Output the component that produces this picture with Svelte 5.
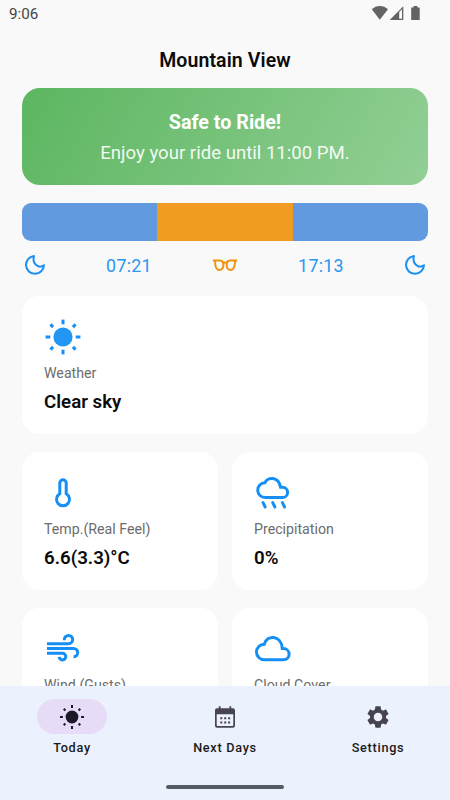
<script>
  let city = 'Mountain View';
  let sunrise = '07:21';
  let sunset = '17:13';

  let cards = [
    { icon: 'sun', label: 'Weather', value: 'Clear sky', wide: true },
    { icon: 'temp', label: 'Temp.(Real Feel)', value: '6.6(3.3)°C' },
    { icon: 'rain', label: 'Precipitation', value: '0%' },
    { icon: 'wind', label: 'Wind (Gusts)', value: '' },
    { icon: 'cloud', label: 'Cloud Cover', value: '' }
  ];

  let tabs = ['Today', 'Next Days', 'Settings'];
  let active = 'Today';

  const rays = [0, 45, 90, 135, 180, 225, 270, 315];
</script>

{#snippet moon()}
  <svg class="moon" viewBox="0 0 22 22">
    <path d="M9.9 1.9A9 9 0 1 0 20 11.3C14.6 15 8 10 9.9 1.9z" />
  </svg>
{/snippet}

<div class="screen">
  <div class="status">
    <span>9:06</span>
    <svg width="50" height="16" viewBox="0 0 50 16">
      <path d="M.8 4.3C5-.2 12.7-.2 17 4.3L8.8 14.8z" />
      <path d="M18.7 15L32.3 1.3V15z" />
      <path class="gap" d="M28.2 6.9L31 4.2V13.7H28.2z" />
      <path d="M40.2 2.5H42.5V1H46.4V2.5H48.7V15H40.2z" />
    </svg>
  </div>

  <h1>{city}</h1>

  <main>
    <section class="banner">
      <strong>Safe to Ride!</strong>
      <p>Enjoy your ride until 11:00 PM.</p>
    </section>

    <div class="daybar"><i></i><i class="light"></i><i></i></div>

    <div class="times">
      {@render moon()}
      <span>{sunrise}</span>
      <svg class="glasses" viewBox="0 0 26 14">
        <path d="M.8 2.5H9M17 2.5H25.2M3 2.5C3 8.5 4 12 7.2 12S11.4 9 11.4 6.5Q11.4 3 8.5 2.5M23 2.5C23 8.5 22 12 18.8 12S14.6 9 14.6 6.5Q14.6 3 17.5 2.5M11 5.2Q13 3.8 15 5.2" />
      </svg>
      <span>{sunset}</span>
      {@render moon()}
    </div>

    <div class="grid">
      {#each cards as card}
        <article class="card" class:wide={card.wide}>
          <svg class="icon" viewBox="0 0 38 38">
            {#if card.icon === 'sun'}
              <circle class="solid" cx="19" cy="19" r="9.6" />
              {#each rays as angle}
                <path d={angle % 90 ? 'M19 5V1.2' : 'M19 6.3V1.6'} transform="rotate({angle} 19 19)" />
              {/each}
            {:else if card.icon === 'temp'}
              <path d="M15.8 19.7V9a3.2 3.2 0 0 1 6.4 0V19.7a6.5 6.5 0 1 1-6.4 0z" />
            {:else if card.icon === 'rain'}
              <path d="M11.3 23.5a7.4 7.4 0 0 1-.4-14.8C13.5 2.9 24.5 1.9 26.6 13.3H28.5a5.1 5.1 0 0 1 0 10.2z" />
              <path class="round" d="M9 28.6l2.2 4.4M18.7 28.6l2.2 4.4M28.4 28.6l2.2 4.4" />
            {:else if card.icon === 'wind'}
              <path d="M3 13.7H24.5a4.15 4.15 0 1 0-4.15-4.15v.6M3 18.4H29.5a4.2 4.2 0 0 1 0 8.4M3 23.3h15.5a3.3 3.3 0 1 1-3.3 3.5" />
            {:else}
              <path d="M10.3 29.8a7.8 7.8 0 0 1 0-15.6C12.5 4.5 27.5 4.5 28.3 18.6H29.5a5.6 5.6 0 0 1 0 11.2z" />
            {/if}
          </svg>
          <span class="label">{card.label}</span>
          <b>{card.value}</b>
        </article>
      {/each}
    </div>
  </main>

  <nav>
    <div class="tabs">
      {#each tabs as tab}
        <button class:active={tab === active}>
          <span class="pill">
            <svg viewBox="0 0 26 26">
              {#if tab === 'Today'}
                <circle cx="13" cy="13" r="6.4" />
                {#each rays as angle}
                  <path class="ray" d={angle % 90 ? 'M13 3.7V1.3' : 'M13 3.9V1'} transform="rotate({angle} 13 13)" />
                {/each}
              {:else if tab === 'Next Days'}
                <path fill-rule="evenodd" d="M6.8 2.2h1.8v2h8.8v-2h1.8v2H21a2 2 0 0 1 2 2V21.7a2 2 0 0 1-2 2H5a2 2 0 0 1-2-2V6.2a2 2 0 0 1 2-2h1.8zM4.7 10.2V21q0 1 1 1H20.3q1 0 1-1V10.2z" />
                <path class="dots" d="M8.3 14.2h9.8M8.3 18.4h9.8" />
              {:else}
                <path transform="translate(-.4 -.4) scale(1.117)" d="M19.14 12.94c.04-.3.06-.61.06-.94 0-.32-.02-.64-.07-.94l2.03-1.58c.18-.14.23-.41.12-.61l-1.92-3.32c-.12-.22-.37-.29-.59-.22l-2.39.96c-.5-.38-1.03-.7-1.62-.94l-.36-2.54c-.04-.24-.24-.41-.48-.41h-3.84c-.24 0-.43.17-.47.41l-.36 2.54c-.59.24-1.13.57-1.62.94l-2.39-.96c-.22-.08-.47 0-.59.22L2.74 8.87c-.12.21-.08.47.12.61l2.03 1.58c-.05.3-.09.63-.09.94s.02.64.07.94l-2.03 1.58c-.18.14-.23.41-.12.61l1.92 3.32c.12.22.37.29.59.22l2.39-.96c.5.38 1.03.7 1.62.94l.36 2.54c.05.24.24.41.48.41h3.84c.24 0 .44-.17.47-.41l.36-2.54c.59-.24 1.13-.56 1.62-.94l2.39.96c.22.08.47 0 .59-.22l1.92-3.32c.12-.22.07-.47-.12-.61zM12 15.8a3.8 3.8 0 1 1 0-7.6 3.8 3.8 0 0 1 0 7.6z" />
              {/if}
            </svg>
          </span>
          {tab}
        </button>
      {/each}
    </div>
    <div class="handle"></div>
  </nav>
</div>

<style>
  .screen {
    display: flex;
    flex-direction: column;
    width: 450px;
    height: 800px;
    overflow: hidden;
    background: #f9f9f9;
    font-family: Roboto, sans-serif;
    color: #0b0b0b;
  }

  svg {
    display: block;
    flex-shrink: 0;
  }

  .status {
    display: flex;
    justify-content: space-between;
    align-items: center;
    height: 28px;
    padding: 0 29px 0 9px;
    font-size: 15.2px;
    font-weight: 400;
    color: #444;
  }

  .status svg {
    margin-top: -3px;
    fill: #636363;
  }

  .status .gap {
    fill: #f9f9f9;
  }

  h1 {
    margin: 0;
    height: 60px;
    line-height: 65px;
    text-align: center;
    font-size: 19.5px;
    font-weight: 600;
    letter-spacing: 0.1px;
  }

  main {
    flex: 1;
    min-height: 0;
    overflow: hidden;
    padding: 0 22px;
  }

  .banner {
    box-sizing: border-box;
    height: 97px;
    padding-top: 21px;
    border-radius: 18px;
    background: linear-gradient(120deg, #5cb660, #92cf95);
    color: white;
    text-align: center;
    font-size: 18.6px;
    line-height: 27px;
  }

  .banner strong {
    font-weight: 700;
    font-size: 19.7px;
  }

  .banner p {
    margin: 3px 0 0;
    font-weight: 400;
    color: rgba(255, 255, 255, 0.93);
  }

  .daybar {
    display: flex;
    height: 38px;
    margin-top: 18px;
    border-radius: 9px;
    overflow: hidden;
  }

  .daybar i {
    flex: 1;
    background: #619ade;
  }

  .daybar .light {
    background: #f09b22;
  }

  .times {
    display: flex;
    justify-content: space-between;
    align-items: center;
    height: 22px;
    margin: 13px 2px 20px;
    font-size: 17.8px;
    font-weight: 400;
    letter-spacing: 0.3px;
    color: #2a97f3;
  }

  .moon {
    width: 22px;
    height: 22px;
    fill: none;
    stroke: #1b8ff2;
    stroke-width: 2;
    stroke-linejoin: round;
  }

  .glasses {
    width: 26px;
    height: 14px;
    fill: none;
    stroke: #f0940f;
    stroke-width: 2;
  }

  .grid {
    display: grid;
    grid-template-columns: 1fr 1fr;
    gap: 18px 14px;
  }

  .card {
    box-sizing: border-box;
    display: flex;
    flex-direction: column;
    height: 138px;
    padding: 22px;
    border-radius: 18px;
    background: white;
  }

  .wide {
    grid-column: span 2;
  }

  .icon {
    width: 38px;
    height: 38px;
    fill: none;
    stroke: #158ff5;
    stroke-width: 3;
  }

  .solid {
    fill: #2196f3;
    stroke: none;
  }

  .round {
    stroke-linecap: round;
  }

  .label {
    margin-top: 9px;
    line-height: 17px;
    font-size: 14.2px;
    font-weight: 400;
    color: #6c6c6c;
  }

  .card b {
    margin-top: 8px;
    line-height: 24px;
    font-size: 18.7px;
    font-weight: 600;
  }

  nav {
    height: 114px;
    background: #ebf2fd;
  }

  .tabs {
    display: flex;
    justify-content: space-between;
    padding: 13px 37px 0;
  }

  button {
    display: flex;
    flex-direction: column;
    align-items: center;
    gap: 6px;
    width: 70px;
    padding: 0;
    border: none;
    background: none;
    font: 500 12.7px/16px Roboto, sans-serif;
    letter-spacing: 0.7px;
    white-space: nowrap;
    color: #1b1a20;
  }

  .pill {
    display: flex;
    align-items: center;
    justify-content: center;
    width: 70px;
    height: 35px;
    border-radius: 18px;
  }

  .active .pill {
    background: #e7dcf7;
  }

  .pill svg {
    width: 26px;
    height: 26px;
    fill: #48444f;
  }

  .active .pill svg {
    fill: #1d1929;
  }

  .ray {
    stroke: #1d1929;
    stroke-width: 2;
  }

  .dots {
    stroke: #48444f;
    stroke-width: 2;
    stroke-dasharray: 2 1.9;
  }

  .handle {
    width: 118px;
    height: 4px;
    margin: 29px auto 0;
    border-radius: 2px;
    background: #565b61;
  }
</style>
